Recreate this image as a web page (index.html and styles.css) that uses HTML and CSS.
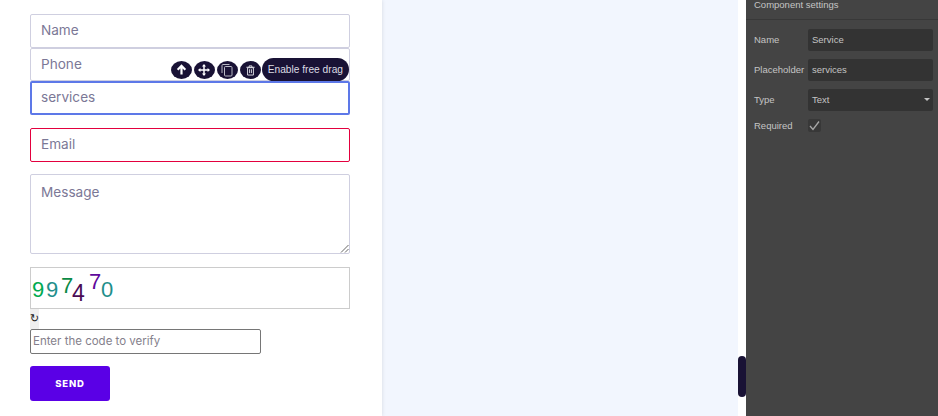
FILE: index.html
```html
<!DOCTYPE html>
<html lang="en">
<head>
    <meta charset="UTF-8">
    <title>Form builder</title>
    <link rel="stylesheet" href="styles.css">
</head>
<body>
    <div class="page">
        <div class="form-panel">
            <form class="form">
                <div class="field-box">Name</div>
                <div class="field-box">Phone</div>
                <div class="field-wrap">
                    <div class="field-box selected">services</div>
                    <div class="toolbar">
                        <span class="tool-btn">
                            <svg width="11" height="11" viewBox="0 0 12 12"><path d="M6 11.5V2.5M1.8 6.2L6 2l4.2 4.2" fill="none" stroke="#fff" stroke-width="2.4"/></svg>
                        </span>
                        <span class="tool-btn">
                            <svg width="12" height="12" viewBox="0 0 13 13"><path d="M6.5 1v11M1 6.5h11" stroke="#fff" stroke-width="1.6"/><path d="M6.5 0L4.3 2.6h4.4zM6.5 13l-2.2-2.6h4.4zM0 6.5l2.6-2.2v4.4zM13 6.5l-2.6-2.2v4.4z" fill="#fff"/></svg>
                        </span>
                        <span class="tool-btn">
                            <svg width="14" height="14" viewBox="0 0 14 14"><path d="M9.5 1.5H3a1 1 0 0 0-1 1v7.5" fill="none" stroke="#b9b9c4" stroke-width="1"/><rect x="4.5" y="3.5" width="7.5" height="9.5" rx="1" fill="none" stroke="#b9b9c4" stroke-width="1"/></svg>
                        </span>
                        <span class="tool-btn">
                            <svg width="11" height="12" viewBox="0 0 12 12"><path d="M1.5 3h9M4.5 3V1.5h3V3" fill="none" stroke="#e4e4ea" stroke-width="1"/><path d="M2.8 3.5v8h6.4v-8zM5 5.2v4.2M7 5.2v4.2" fill="none" stroke="#e4e4ea" stroke-width="1"/></svg>
                        </span>
                        <span class="tool-label">Enable free drag</span>
                    </div>
                </div>
                <div class="field-box invalid">Email</div>
                <div class="field-box message">
                    Message
                    <svg class="resizer" width="9" height="9" viewBox="0 0 9 9"><path d="M8.5 1L1 8.5M8.5 5L5 8.5" stroke="#666" stroke-width="1"/></svg>
                </div>
                <div class="captcha">
                    <span class="digit d1">9</span>
                    <span class="digit d2">9</span>
                    <span class="digit d3">7</span>
                    <span class="digit d4">4</span>
                    <span class="digit d5">7</span>
                    <span class="digit d6">0</span>
                </div>
                <div class="refresh">↻</div>
                <div class="code-input">Enter the code to verify</div>
                <button type="button" class="send">SEND</button>
            </form>
        </div>
        <div class="canvas"></div>
        <div class="gutter">
            <div class="handle"></div>
        </div>
        <div class="settings">
            <div class="settings-title">Component settings</div>
            <div class="settings-body">
                <div class="row">
                    <span class="row-label">Name</span>
                    <span class="row-value">Service</span>
                </div>
                <div class="row">
                    <span class="row-label">Placeholder</span>
                    <span class="row-value">services</span>
                </div>
                <div class="row">
                    <span class="row-label">Type</span>
                    <span class="row-value select">Text<i class="caret"></i></span>
                </div>
                <div class="row check-row">
                    <span class="row-label">Required</span>
                    <span class="check">
                        <svg width="13" height="13" viewBox="0 0 13 13"><path d="M2 7l3 3.5 6-8" fill="none" stroke="#a8a8a8" stroke-width="1.3"/></svg>
                    </span>
                </div>
            </div>
        </div>
    </div>
</body>
</html>
```

FILE: styles.css
```css
html, body {
    margin: 0;
    padding: 0;
    height: 100%;
    overflow: hidden;
}

body {
    font-family: Inter, "Open Sans", sans-serif;
    background: #fff;
}

.page {
    display: flex;
    height: 416px;
}

.form-panel {
    width: 382px;
    flex: none;
    box-sizing: border-box;
    padding: 14px 32px 0 30px;
    background: #fff;
    box-shadow: 0 0 4px rgba(0, 0, 0, 0.12);
    position: relative;
}

.form {
    display: flex;
    flex-direction: column;
    align-items: flex-start;
}

.field-box {
    width: 320px;
    height: 33.5px;
    box-sizing: border-box;
    border: 1px solid #cfcfe0;
    border-radius: 2px;
    padding: 0 10px;
    line-height: 31px;
    font-size: 13.6px;
    color: #7b7896;
    background: #fff;
    position: relative;
}

.field-wrap {
    position: relative;
    margin-bottom: 13.5px;
}

.selected {
    border: 2px solid #5d78e8;
    padding: 0 9px;
    line-height: 29px;
}

.invalid {
    border-color: #e3003e;
    margin-bottom: 12.5px;
}

.message {
    height: 80px;
    margin-bottom: 13px;
    line-height: 35px;
}

.resizer {
    position: absolute;
    right: 0;
    bottom: 0;
}

.toolbar {
    position: absolute;
    right: 1px;
    top: -23px;
    display: flex;
    align-items: center;
    gap: 2px;
}

.tool-btn {
    width: 21px;
    height: 18px;
    border-radius: 50%;
    background: #191235;
    display: flex;
    align-items: center;
    justify-content: center;
}

.tool-label {
    height: 23px;
    line-height: 23px;
    padding: 0 6px;
    margin-left: -1px;
    border-radius: 12px;
    background: #191235;
    color: #dcdce4;
    font-family: "Liberation Sans", sans-serif;
    font-size: 10.2px;
    white-space: nowrap;
}

.captcha {
    width: 320px;
    height: 42px;
    box-sizing: border-box;
    border: 1px solid #cccccc;
    display: flex;
    padding-left: 1px;
    font-family: "Liberation Sans", sans-serif;
    font-size: 22px;
    line-height: 40px;
}

.digit {
    display: block;
}

.d1 { color: #00aa50; margin-top: 2px; width: 14px; }
.d2 { color: #1f8f8c; margin-top: 2px; width: 15px; }
.d3 { color: #0a8a45; margin-top: -2px; width: 11px; }
.d4 { color: #4b0b55; margin-top: 5px; font-size: 23px; width: 17px; }
.d5 { color: #5f0a9c; margin-top: -6px; width: 12px; }
.d6 { color: #1f8f8c; margin-top: 2px; }

.refresh {
    width: 9px;
    height: 20px;
    background: #efefef;
    font-family: "DejaVu Sans", sans-serif;
    font-size: 11px;
    line-height: 20px;
    color: #1c1c1c;
    white-space: nowrap;
}

.code-input {
    width: 231px;
    height: 25px;
    box-sizing: border-box;
    border: 1px solid #767676;
    border-radius: 2px;
    padding-left: 2px;
    font-size: 11.5px;
    line-height: 23px;
    color: #857f8c;
    margin-bottom: 12px;
}

.send {
    width: 80px;
    height: 35px;
    border: 0;
    border-radius: 3px;
    background: #5a00e6;
    color: #fff;
    font-family: Inter, sans-serif;
    font-weight: 800;
    font-size: 9.5px;
    letter-spacing: 0.8px;
    padding: 0;
}

.canvas {
    flex: 1;
    background: #f2f6fe;
}

.gutter {
    width: 8px;
    flex: none;
    background: #fff;
    position: relative;
}

.handle {
    position: absolute;
    left: 0;
    top: 356px;
    width: 8px;
    height: 41px;
    border-radius: 4px;
    background: #191235;
}

.settings {
    width: 192px;
    flex: none;
    background: #444444;
    color: #c4c4c4;
    font-family: "Liberation Sans", sans-serif;
    font-size: 9.5px;
}

.settings-title {
    height: 20px;
    box-sizing: border-box;
    padding-left: 8px;
    line-height: 10px;
    border-bottom: 1px solid #383838;
}

.settings-body {
    padding: 9px 5px 0 8px;
    display: flex;
    flex-direction: column;
    gap: 8px;
}

.row {
    display: flex;
    align-items: center;
    height: 22px;
}

.row-label {
    width: 54px;
    flex: none;
    padding-bottom: 2px;
}

.row-value {
    flex: 1;
    height: 22px;
    line-height: 22px;
    padding-left: 4px;
    border-radius: 2px;
    background: #333333;
    position: relative;
}

.caret {
    position: absolute;
    right: 3px;
    top: 9px;
    border-left: 3px solid transparent;
    border-right: 3px solid transparent;
    border-top: 3px solid #c4c4c4;
}

.check-row {
    height: 13px;
}

.check-row .row-label {
    padding-bottom: 0;
}

.check {
    width: 13px;
    height: 13px;
    border-radius: 2px;
    background: #383838;
    display: block;
}
```
